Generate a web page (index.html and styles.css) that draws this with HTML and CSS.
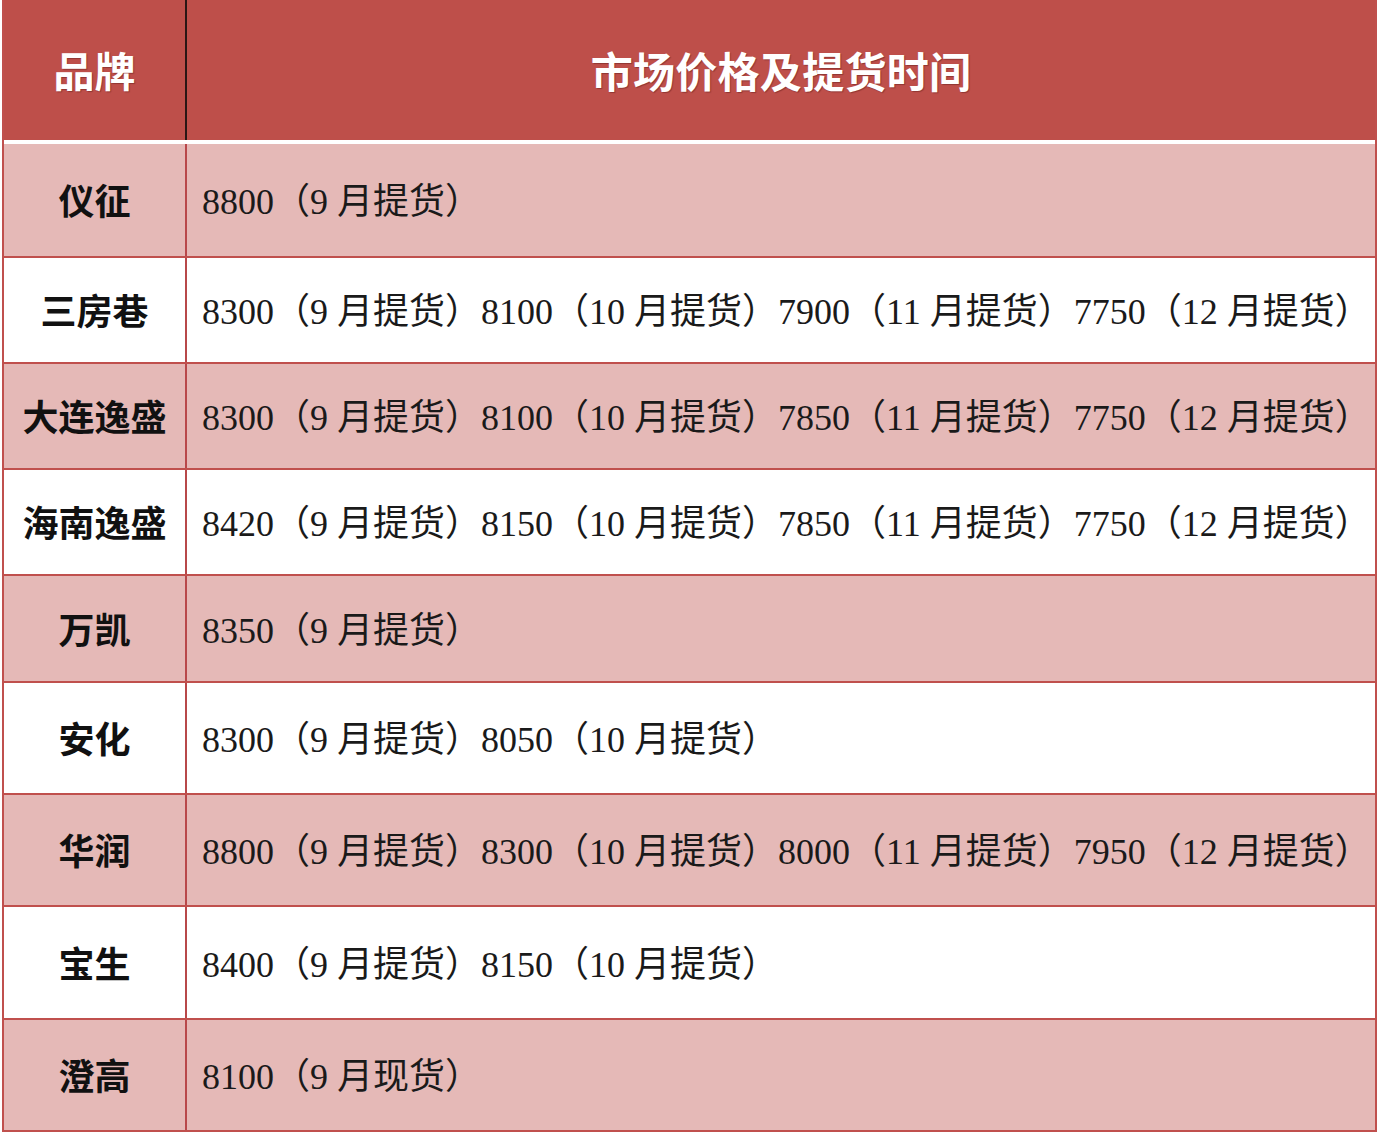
FILE: index.html
```html
<!DOCTYPE html>
<html lang="zh-CN">
<head>
<meta charset="utf-8">
<title>市场价格及提货时间</title>
<link rel="stylesheet" href="styles.css">
</head>
<body>
<div class="table">
  <div class="head">
    <div class="hcell brand-h">品牌</div>
    <div class="hcell price-h">市场价格及提货时间</div>
  </div>
  <div class="gap"></div>
  <div class="row pink h114"><div class="brand">仪征</div><div class="price">8800（9 月提货）</div></div>
  <div class="row white h106"><div class="brand">三房巷</div><div class="price">8300（9 月提货）8100（10 月提货）7900（11 月提货）7750（12 月提货）</div></div>
  <div class="row pink h106"><div class="brand">大连逸盛</div><div class="price">8300（9 月提货）8100（10 月提货）7850（11 月提货）7750（12 月提货）</div></div>
  <div class="row white h106"><div class="brand">海南逸盛</div><div class="price">8420（9 月提货）8150（10 月提货）7850（11 月提货）7750（12 月提货）</div></div>
  <div class="row pink h107"><div class="brand">万凯</div><div class="price">8350（9 月提货）</div></div>
  <div class="row white h112"><div class="brand">安化</div><div class="price">8300（9 月提货）8050（10 月提货）</div></div>
  <div class="row pink h112"><div class="brand">华润</div><div class="price">8800（9 月提货）8300（10 月提货）8000（11 月提货）7950（12 月提货）</div></div>
  <div class="row white h113"><div class="brand">宝生</div><div class="price">8400（9 月提货）8150（10 月提货）</div></div>
  <div class="row pink h112"><div class="brand">澄高</div><div class="price">8100（9 月现货）</div></div>
</div>
</body>
</html>
```
FILE: styles.css
```css
html, body {
  margin: 0;
  padding: 0;
  background: #ffffff;
}

body {
  font-family: "Noto Sans CJK SC", sans-serif;
  text-spacing-trim: space-all;
}

.table {
  margin-left: 2px;
  width: 1375px;
  box-sizing: border-box;
  border-left: 2px solid #c0504d;
  border-right: 2px solid #c0504d;
}

.head {
  display: grid;
  grid-template-columns: 183px 1fr;
  height: 140px;
  background: #be4f4a;
}

.hcell {
  display: flex;
  align-items: center;
  justify-content: center;
  color: #ffffff;
  font-family: "Noto Sans CJK SC", sans-serif;
  font-weight: 700;
  text-shadow: 1px 1px 1px rgba(60, 10, 10, 0.35);
  padding-bottom: 2px;
  box-sizing: border-box;
}

.brand-h {
  font-size: 41px;
  border-right: 2px solid #2a1615;
}

.price-h {
  font-size: 42px;
  letter-spacing: 0.3px;
}

.gap {
  height: 4px;
  background: #ffffff;
}

.row {
  display: grid;
  grid-template-columns: 183px 1fr;
  box-sizing: border-box;
  border-bottom: 2px solid #c0504d;
}

.pink { background: #e5b9b7; }
.white { background: #ffffff; }

.h106 { height: 106px; }
.h107 { height: 107px; }
.h112 { height: 112px; }
.h113 { height: 113px; }
.h114 { height: 114px; }

.brand {
  display: flex;
  align-items: center;
  justify-content: center;
  border-right: 2px solid #b8484a;
  font-family: "Noto Sans CJK SC", serif;
  font-weight: 700;
  font-size: 36px;
  color: #111111;
  white-space: nowrap;
  padding-bottom: 2px;
  box-sizing: border-box;
}

.price {
  display: flex;
  align-items: center;
  padding-left: 15px;
  padding-bottom: 4px;
  box-sizing: border-box;
  font-family: "Liberation Serif", "Noto Sans CJK SC", serif;
  font-weight: 400;
  font-size: 36px;
  color: #1a1a1a;
  white-space: nowrap;
}
```
